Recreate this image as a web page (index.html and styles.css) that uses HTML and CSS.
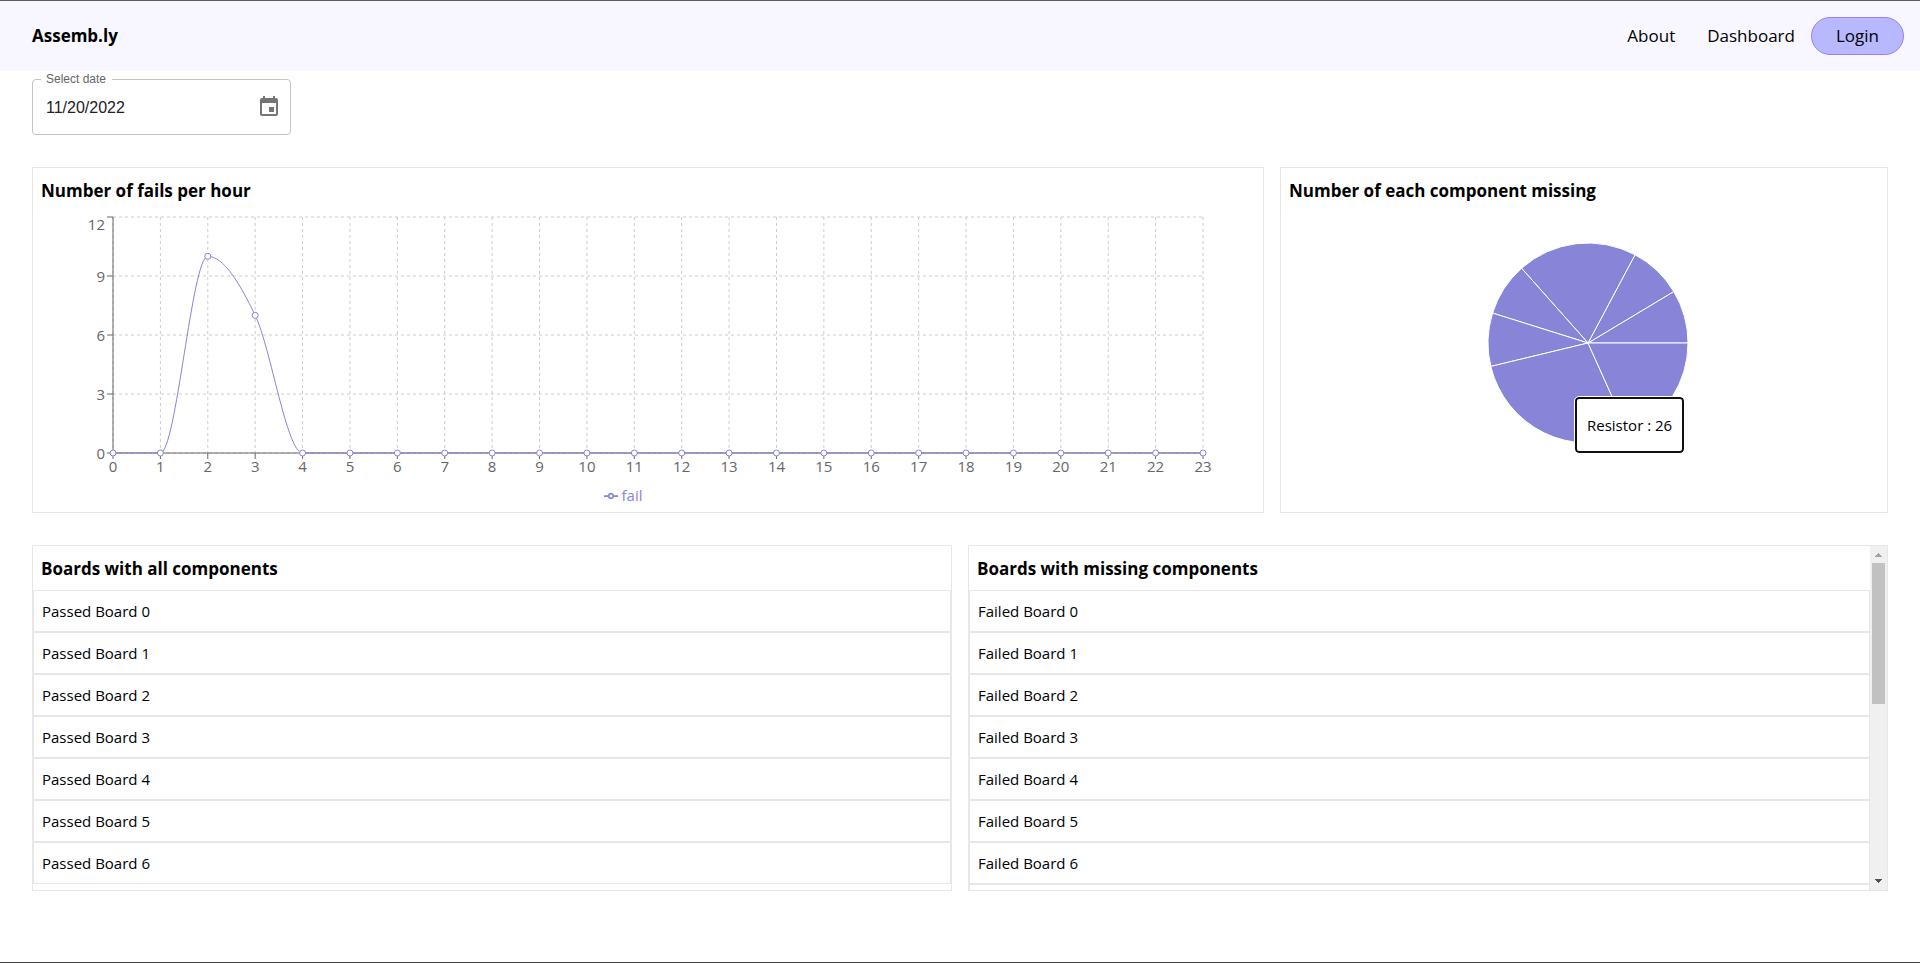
FILE: index.html
```
<!DOCTYPE html>
<html lang="en">
<head>
<meta charset="utf-8">
<meta name="viewport" content="width=device-width, initial-scale=1">
<title>Assemb.ly</title>
<link rel="stylesheet" href="styles.css">
</head>
<body>
<header class="header">
  <a class="brand" href="#">Assemb.ly</a>
  <nav class="nav">
    <a class="nav-link" href="#about">About</a>
    <a class="nav-link" href="#dashboard">Dashboard</a>
    <button class="login" type="button">Login</button>
  </nav>
</header>
<main class="main">
  <div class="date-field">
    <label class="date-label" for="date">Select date</label>
    <input class="date-input" id="date" type="text" value="11/20/2022">
    <button class="date-button" type="button" aria-label="Choose date">
      <svg class="date-icon" viewBox="0 0 24 24"><path d="M17 12h-5v5h5v-5zM16 1v2H8V1H6v2H5c-1.11 0-1.99.9-1.99 2L3 19c0 1.1.89 2 2 2h14c1.1 0 2-.9 2-2V5c0-1.1-.9-2-2-2h-1V1h-2zm3 18H5V8h14v11z"/></svg>
    </button>
  </div>

  <div class="charts">
    <section class="card">
      <h2 class="card-title">Number of fails per hour</h2>
      <div class="line-chart">
        <svg class="line-svg" id="line" viewBox="0 0 1230 268" role="img" aria-label="Fails per hour"></svg>
        <div class="legend">
          <svg class="legend-icon" viewBox="0 0 32 32"><path d="M0,16h10.67A5.33,5.33,0,1,1,21.33,16H32M21.33,16A5.33,5.33,0,1,1,10.67,16"/></svg>
          <span>fail</span>
        </div>
      </div>
    </section>
    <section class="card">
      <h2 class="card-title">Number of each component missing</h2>
      <div class="pie-chart">
        <svg class="pie-svg" id="pie" viewBox="0 0 606 300" role="img" aria-label="Missing components"></svg>
        <div class="tooltip">Resistor : 26</div>
      </div>
    </section>
  </div>

  <div class="boards">
    <section class="card board-card">
      <div class="board-content">
        <h2 class="card-title">Boards with all components</h2>
        <ul class="list">
          <li class="row">Passed Board 0</li>
          <li class="row">Passed Board 1</li>
          <li class="row">Passed Board 2</li>
          <li class="row">Passed Board 3</li>
          <li class="row">Passed Board 4</li>
          <li class="row">Passed Board 5</li>
          <li class="row">Passed Board 6</li>
        </ul>
      </div>
    </section>
    <section class="card board-card">
      <div class="board-content">
        <h2 class="card-title">Boards with missing components</h2>
        <ul class="list">
          <li class="row">Failed Board 0</li>
          <li class="row">Failed Board 1</li>
          <li class="row">Failed Board 2</li>
          <li class="row">Failed Board 3</li>
          <li class="row">Failed Board 4</li>
          <li class="row">Failed Board 5</li>
          <li class="row">Failed Board 6</li>
          <li class="row" aria-hidden="true"></li>
        </ul>
      </div>
      <div class="scrollbar" aria-hidden="true">
        <svg class="arrow" viewBox="0 0 17 17"><path fill="#a3a3a3" d="M5 11h7v-1h-1v-1h-1v-1h-1v-1h-1v1h-1v1h-1v1h-1z"/></svg>
        <div class="track"><div class="thumb"></div></div>
        <svg class="arrow" viewBox="0 0 17 17"><path fill="#505050" d="M5 6h7v1h-1v1h-1v1h-1v1h-1v-1h-1v-1h-1v-1h-1z"/></svg>
      </div>
    </section>
  </div>
</main>
<script src="charts.js"></script>
</body>
</html>
```

FILE: styles.css
```
* {
  box-sizing: border-box;
}

body {
  display: flex;
  flex-direction: column;
  min-height: 100vh;
  margin: 0;
  border-top: 1px solid #5f5b66;
  border-bottom: 1px solid #444;
  background: #fff;
  color: #000;
  font-family: "Open Sans", "Noto Sans", sans-serif;
  font-size: 15px;
  line-height: 24px;
}

.header {
  display: flex;
  align-items: center;
  justify-content: space-between;
  height: 70px;
  padding: 0 16px 0 32px;
  background: #f8f7ff;
}

.brand {
  color: #000;
  font-size: 17px;
  font-weight: 700;
  text-decoration: none;
}

.nav {
  display: flex;
  align-items: center;
}

.nav-link {
  padding: 0 16px;
  color: #000;
  font-size: 17px;
  text-decoration: none;
}

.login {
  height: 38px;
  padding: 0 24px;
  border: 1px solid #9381ff;
  border-radius: 19px;
  background: #b8b8ff;
  color: #000;
  font: inherit;
  font-size: 17px;
}

.main {
  flex: 1;
  padding: 8px 32px;
}

.date-field {
  position: relative;
  display: flex;
  align-items: center;
  width: 259px;
  height: 56px;
  padding: 0 9px 0 13px;
  border: 1px solid #c4c4c4;
  border-radius: 4px;
}

.date-label {
  position: absolute;
  top: -9px;
  left: 8px;
  padding: 0 6px 0 5px;
  background: #fff;
  color: #666;
  font: 12px/16px "Liberation Sans", sans-serif;
}

.date-input {
  flex: 1;
  min-width: 0;
  padding: 2px 0 0;
  border: 0;
  outline: 0;
  background: none;
  color: #212121;
  font: 16px/24px "Liberation Sans", sans-serif;
}

.date-button {
  display: flex;
  padding: 0;
  border: 0;
  background: none;
}

.date-icon {
  width: 24px;
  height: 24px;
  fill: #757575;
}

.charts {
  display: grid;
  grid-template-columns: repeat(3, 1fr);
  gap: 16px;
  margin-top: 32px;
}

.charts .card:first-child {
  grid-column: span 2;
}

.card {
  border: 1px solid #e5e7eb;
  background: #fff;
}

.card-title {
  margin: 0;
  padding: 9px 8px 7px;
  font-size: 17px;
  font-weight: 700;
  line-height: 28px;
}

.line-chart {
  padding-bottom: 3px;
}

.line-svg {
  display: block;
  width: 100%;
  overflow: visible;
}

.line-svg text {
  fill: #666;
  font-size: 15px;
}

.grid-line {
  fill: none;
  stroke: #ccc;
  stroke-dasharray: 3 3;
}

.axis {
  fill: none;
  stroke: #666;
}

.curve {
  fill: none;
  stroke: #8884d8;
}

.dot {
  fill: #fff;
  stroke: #8884d8;
}

.legend {
  display: flex;
  align-items: center;
  justify-content: center;
  gap: 4px;
  height: 29px;
  padding-right: 50px;
  color: #8884d8;
}

.legend-icon {
  width: 14px;
  height: 14px;
  margin-top: 3px;
  fill: none;
  stroke: #8884d8;
  stroke-width: 4;
}

.pie-chart {
  position: relative;
}

.pie-svg {
  display: block;
  width: 100%;
  height: 300px;
}

.slice {
  fill: #8884d8;
  stroke: #fff;
}

.tooltip {
  position: absolute;
  top: 185px;
  left: calc(50% - 9px);
  padding: 16px 10px;
  border: 2px solid #101010;
  border-radius: 4px;
  outline: 1px solid #fff;
  background: #fff;
  font-size: 15px;
  line-height: 20px;
  white-space: nowrap;
}

.boards {
  display: grid;
  grid-template-columns: 1fr 1fr;
  gap: 16px;
  margin-top: 32px;
}

.board-card {
  display: flex;
  height: 346px;
  overflow: hidden;
}

.board-content {
  flex: 1;
}

.list {
  margin: 0;
  padding: 0;
  list-style: none;
}

.row {
  height: 42px;
  padding: 8px;
  border: 1px solid #e5e7eb;
}

.scrollbar {
  display: flex;
  flex-direction: column;
  width: 17px;
  background: #f0f0f0;
}

.arrow {
  width: 17px;
  height: 17px;
}

.track {
  flex: 1;
  padding: 0 2px;
}

.thumb {
  height: 141px;
  background: #c1c1c1;
}
```

FILE: charts.js
```
const fails = [0, 0, 10, 7].concat(Array(20).fill(0));
const missing = [8, 8, 18, 8, 8, 26, 17];

const plot = { left: 80, right: 1170, top: 5, bottom: 241, max: 12 };
const xAt = i => plot.left + (plot.right - plot.left) * i / (fails.length - 1);
const yAt = v => plot.bottom - (plot.bottom - plot.top) * v / plot.max;

// Tangents that keep the curve monotone between points.
const slopes = fails.map((v, i) => {
  if (i === 0 || i === fails.length - 1) return 0;
  const a = v - fails[i - 1];
  const b = fails[i + 1] - v;
  if (a * b <= 0) return 0;
  return 2 * Math.sign(a) * Math.min(Math.abs(a), Math.abs(b), Math.abs(a + b) / 4);
});

let out = '';
const ticks = [0, 3, 6, 9, 12];
ticks.forEach(v => {
  out += `<path class="grid-line" d="M${plot.left},${yAt(v)}H${plot.right}"/>`;
});
fails.forEach((v, i) => {
  out += `<path class="grid-line" d="M${xAt(i)},${plot.top}V${plot.bottom}"/>`;
});
out += `<path class="axis" d="M${plot.left},${plot.top}V${plot.bottom}H${plot.right}"/>`;
ticks.forEach(v => {
  const y = yAt(v);
  out += `<path class="axis" d="M${plot.left - 6},${y}h6"/>`;
  out += `<text x="${plot.left - 8}" y="${Math.max(y, 12) + 6}" text-anchor="end">${v}</text>`;
});
fails.forEach((v, i) => {
  out += `<path class="axis" d="M${xAt(i)},${plot.bottom}v6"/>`;
  out += `<text x="${xAt(i)}" y="260" text-anchor="middle">${i}</text>`;
});

let d = `M${xAt(0)},${yAt(fails[0])}`;
for (let i = 1; i < fails.length; i++) {
  const third = (xAt(i) - xAt(i - 1)) / 3;
  d += `C${xAt(i - 1) + third},${yAt(fails[i - 1] + slopes[i - 1] / 3)} `
     + `${xAt(i) - third},${yAt(fails[i] - slopes[i] / 3)} ${xAt(i)},${yAt(fails[i])}`;
}
out += `<path class="curve" d="${d}"/>`;
fails.forEach((v, i) => {
  out += `<circle class="dot" cx="${xAt(i)}" cy="${yAt(v)}" r="3"/>`;
});
document.getElementById('line').innerHTML = out;

const cx = 307, cy = 131, r = 100;
const total = missing.reduce((a, b) => a + b, 0);
let angle = 0;
let slices = '';
missing.forEach(n => {
  const end = angle + n / total * 2 * Math.PI;
  const point = t => `${cx + r * Math.cos(t)},${cy - r * Math.sin(t)}`;
  slices += `<path class="slice" d="M${cx},${cy}L${point(angle)}A${r},${r},0,0,0,${point(end)}Z"/>`;
  angle = end;
});
document.getElementById('pie').innerHTML = slices;
```
